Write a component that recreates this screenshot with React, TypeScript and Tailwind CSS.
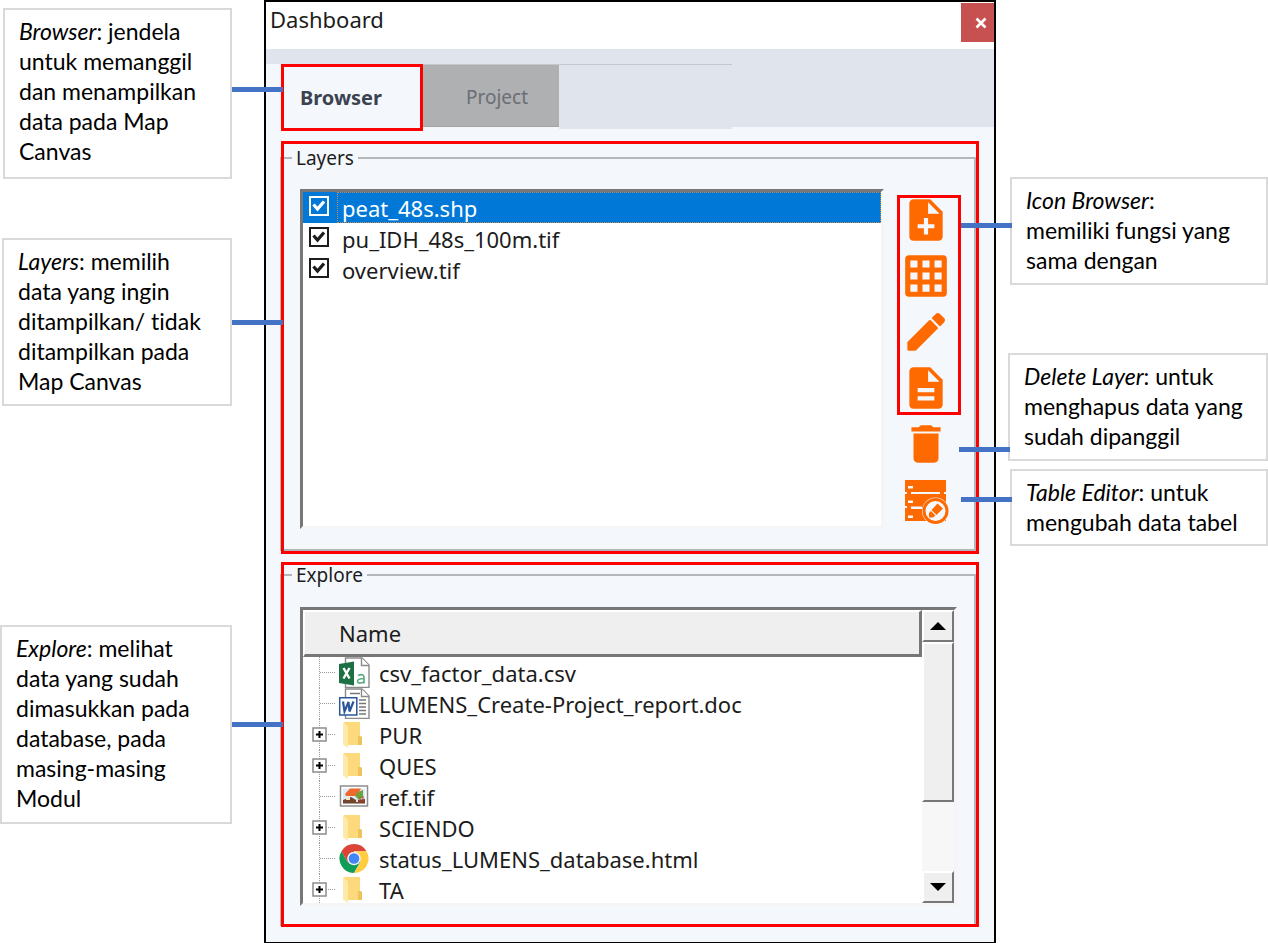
import { useState } from "react";
import type { ReactNode } from "react";
import { MdNoteAdd, MdDescription, MdDelete } from "react-icons/md";

const uiFont = "font-['Noto_Sans','Open_Sans',sans-serif]";

function Connector({ side }: { side: string }) {
  return <span aria-hidden="true" className={"absolute z-20 h-[5px] w-[51px] bg-[#4472c4] " + side} />;
}

function Callout({ className, line, children }: { className: string; line: string; children: ReactNode }) {
  return (
    <aside className={"relative border-2 border-[#d9d9d9] bg-white text-[23px] leading-[30px] text-black font-['Lato',sans-serif] [font-variant-ligatures:none] " + className}>
      <p className="whitespace-nowrap">{children}</p>
      <Connector side={line} />
    </aside>
  );
}

function GridIcon() {
  return (
    <svg viewBox="0 0 24 24" className="size-[50px]">
      <rect x="2" y="2" width="20" height="20" rx="1.800" fill="currentColor" />
      <path
        fill="#f4f8fd"
        d="M4.500 4.500h3.400v3.400h-3.400zM10.300 4.500h3.400v3.400h-3.400zM16.100 4.500h3.400v3.400h-3.400zM4.500 10.300h3.400v3.400h-3.400zM10.300 10.300h3.400v3.400h-3.400zM16.100 10.300h3.400v3.400h-3.400zM4.500 16.100h3.400v3.400h-3.400zM10.300 16.100h3.400v3.400h-3.400zM16.100 16.100h3.400v3.400h-3.400z"
      />
    </svg>
  );
}

function PencilIcon() {
  return (
    <svg viewBox="0 0 24 24" className="size-[50px]" fill="currentColor" stroke="currentColor" strokeWidth="1.1" strokeLinejoin="round">
      <path d="M3.600 17.100V20.400H6.900L17.200 10.100L13.900 6.800Z" />
      <path d="M18.700 8.600L15.400 5.300L17.200 3.600Q17.700 3.200 18.200 3.600L20.400 5.800Q20.800 6.300 20.400 6.800Z" />
    </svg>
  );
}

function TableEditorIcon() {
  return (
    <svg viewBox="0 0 46 46" className="size-[46px]">
      <path fill="#ff6a00" d="M1 1H42V13H40V15H42V27H40V29H42V42H1V29H3V27H1V15H3V13H1Z" />
      <g fill="#f4f8fd">
        <path d="M4 7H9V9.500H4ZM4 21.500H9V24H4ZM4 36.500H9V39H4ZM7 13H36V15H7ZM7 27.500H18V30H7Z" />
        <circle cx="31.500" cy="32" r="13.500" />
      </g>
      <circle cx="31.500" cy="32" r="11.500" fill="none" stroke="#ff6a00" strokeWidth="3" />
      <path fill="#ff6a00" d="M25 38.500V34L27 32L31.500 36.500L29 38.500ZM27.500 31L33.500 24.500L39 29.500L32.500 36Z" />
    </svg>
  );
}

function ExcelIcon() {
  return (
    <svg viewBox="0 0 32 31" className="h-[31px] w-8">
      <path d="M7.500 1H24L31 8V30.500H7.500Z" fill="#fff" stroke="#8b8b8b" strokeWidth="1.400" />
      <path d="M23.500 1V8.500H31" fill="#fff" stroke="#8b8b8b" strokeWidth="1.400" />
      <path d="M1 7L16 4.500V28.500L1 26Z" fill="#1d7044" />
      <path d="M5.500 11L11.500 21.500M11.500 11L5.500 21.500" stroke="#fff" strokeWidth="2.400" />
      <path d="M20 18.500Q26 16 26 20.500V26.500M26 21.500Q19.500 21.500 19.500 24.300Q20 27.500 26 25" fill="none" stroke="#5cab83" strokeWidth="1.700" />
    </svg>
  );
}

function WordIcon() {
  return (
    <svg viewBox="0 0 32 31" className="h-[31px] w-8">
      <path d="M7.500 1H24L31 8V30.500H7.500Z" fill="#fff" stroke="#8b8b8b" strokeWidth="1.400" />
      <path d="M23.500 1V8.500H31" fill="#fff" stroke="#8b8b8b" strokeWidth="1.400" />
      <path d="M12 5.500H22M21 12H28M21 15.500H28M21 19H28M21 22.500H28M21 26H28" stroke="#777" strokeWidth="1.300" />
      <path d="M1.700 9.700H18.800V27H1.700Z" fill="#fff" stroke="#2b579a" strokeWidth="1.500" />
      <path d="M5 13.500L6.500 23.500L10.500 14L11.500 23.500L15.500 13.500" fill="none" stroke="#2b579a" strokeWidth="2.200" />
    </svg>
  );
}

function FolderIcon() {
  return (
    <svg viewBox="0 0 32 31" className="h-[31px] w-8">
      <path d="M6 3H22V17L24 18V26H6Z" fill="#fbd97c" />
      <path d="M22 17H20V26H24V18Z" fill="#edc35b" />
      <path d="M5 3L10 7.500V29L5 25.500Z" fill="#ffe9a8" />
    </svg>
  );
}

function PictureIcon() {
  return (
    <svg viewBox="0 0 32 31" className="h-[31px] w-8">
      <path d="M2.500 5H29.500V25H2.500Z" fill="#fff" stroke="#8d8d8d" strokeWidth="1.500" />
      <path d="M5 7.500H27V22.500H5Z" fill="#dcebf4" />
      <path d="M7 13L12 7.500H23L19 15H8Z" fill="#ee6a2c" />
      <path d="M17 15L20 11L25 9V17L20 18Z" fill="#6ca43b" />
      <path d="M5 19L13 16L18 19L27 18V22.500H5Z" fill="#70452b" />
      <path d="M8 16H12V19H8ZM18 19H20V21H18Z" fill="#f2e5d5" />
      <path d="M22 16V22M25 15V21" stroke="#c63a2b" strokeWidth="1" />
    </svg>
  );
}

function ChromeIcon() {
  return (
    <svg viewBox="0 0 32 31" className="h-[31px] w-8">
      <path d="M16 15.500L3.500 8.300A14.400 14.400 0 0 1 28.500 8.300H16Z" fill="#db4437" />
      <path d="M3.500 8.300A14.400 14.400 0 0 0 16 30L22.300 19L16 15.500L9.800 19.200Z" fill="#0f9d58" />
      <path d="M3.500 8.300L9.800 19.200L16 15.500V8.300Z" fill="#db4437" />
      <path d="M22.300 19L16 30A14.400 14.400 0 0 0 28.500 8.300H16V15.500Z" fill="#ffcd40" />
      <circle cx="16" cy="15.500" r="6.800" fill="#f1f1f1" />
      <circle cx="16" cy="15.500" r="5.300" fill="#4285f4" />
    </svg>
  );
}

const tree: { name: string; icon: () => ReactNode; folder?: boolean }[] = [
  { name: "csv_factor_data.csv", icon: ExcelIcon },
  { name: "LUMENS_Create-Project_report.doc", icon: WordIcon },
  { name: "PUR", icon: FolderIcon, folder: true },
  { name: "QUES", icon: FolderIcon, folder: true },
  { name: "ref.tif", icon: PictureIcon },
  { name: "SCIENDO", icon: FolderIcon, folder: true },
  { name: "status_LUMENS_database.html", icon: ChromeIcon },
  { name: "TA", icon: FolderIcon, folder: true },
];

function Branch({ folder }: { folder?: boolean }) {
  return (
    <svg viewBox="0 0 24 31" className="h-[31px] w-6">
      <path d="M8.500 0V31M9 15.500H24" stroke="#999" strokeDasharray="1 1" />
      {folder && (
        <>
          <path d="M2 9H15V22H2Z" fill="#fff" stroke="#8c8c8c" strokeWidth="1.500" />
          <path d="M5 15.500H12M8.500 12V19" stroke="#000" strokeWidth="2" />
        </>
      )}
    </svg>
  );
}

function Group({ title, className, children }: { title: string; className: string; children: ReactNode }) {
  return (
    <section className={"relative ml-[14px] mr-[15px] pr-[3px] " + className}>
      <fieldset className="min-w-0 border-2 border-[#b4b7ba] pr-[13px] pl-[18px]">
        <legend className="ml-[-8px] h-[26px] px-1 text-[19px] leading-[26px]">{title}</legend>
        {children}
      </fieldset>
      <span aria-hidden="true" className="pointer-events-none absolute inset-y-0 right-0 left-px border-[3px] border-[#ff0000]" />
    </section>
  );
}

const sunken = "border-[3px] border-t-[#777] border-l-[#777] border-r-[#f5f5f5] border-b-[#f5f5f5]";
const raised = "border-t-white border-l-white border-r-[#777] border-b-[#777] bg-[#efefef]";

export default function App() {
  const [layers, setLayers] = useState([
    { name: "peat_48s.shp", on: true },
    { name: "pu_IDH_48s_100m.tif", on: true },
    { name: "overview.tif", on: true },
  ]);
  const toggle = (i: number) => setLayers(layers.map((l, n) => (n === i ? { ...l, on: !l.on } : l)));

  return (
    <div className="flex min-h-screen items-start bg-white">
      <div className="flex w-[264px] shrink-0 flex-col items-end pr-8">
        <Callout className="mt-2 h-[171px] w-[229px] pt-1.5 pl-[14px]" line="top-[77px] left-full ml-0.5">
          <i>Browser</i>: jendela<br />untuk memanggil<br />dan menampilkan<br />data pada Map<br />Canvas
        </Callout>
        <Callout className="mt-[59px] h-[168px] w-[230px] pt-1.5 pl-[14px]" line="top-[80px] left-full ml-0.5">
          <i>Layers</i>: memilih<br />data yang ingin<br />ditampilkan/ tidak<br />ditampilkan pada<br />Map Canvas
        </Callout>
        <Callout className="mt-[219px] h-[199px] w-[232px] pt-1.5 pl-[14px]" line="top-[95px] left-full ml-0.5">
          <i>Explore</i>: melihat<br />data yang sudah<br />dimasukkan pada<br />database, pada<br />masing-masing<br />Modul
        </Callout>
      </div>

      <main className={"min-w-0 flex-1 border-2 border-black bg-[#f4f8fd] pb-[15px] text-[#1c1c1c] " + uiFont}>
        <header className="flex h-[47px] items-start justify-between bg-white pl-1">
          <h1 className="pt-0.5 text-[22px] leading-[30px]">Dashboard</h1>
          <button aria-label="Close" className="mt-px flex h-[39px] w-[33px] items-center justify-center bg-[#c75050] pl-1.5">
            <svg viewBox="0 0 12 12" className="size-3" stroke="#fff" strokeWidth="2.600"><path d="M1.500 1.500L10.500 10.500M10.500 1.500L1.500 10.500" /></svg>
          </button>
        </header>
        <div className="h-[15px] bg-[#e0e4ed]" />
        <nav className="flex items-start pl-[15px]">
          <button className="h-[67px] w-[142px] border-[3px] border-[#ff0000] pr-[22px] text-[20px] font-bold text-[#3c4350]">Browser</button>
          <button className="h-[63px] w-[136px] border-y border-t-[#c4c7cc] border-b-[#a0a2a4] bg-[#aeb0b1] pt-1 pl-3 text-[19px] text-[#6b6e75]">Project</button>
          <div className="h-[65px] w-[173px] border-t border-[#c4c7cc] bg-[#e0e4ed]" />
          <div className="h-[63px] flex-1 bg-[#e0e4ed]" />
        </nav>

        <Group title="Layers" className="mt-[10px] pt-1 pb-[3px]">
          <div className="flex pt-[18px] pb-5">
            <ul className={"h-[340px] min-w-0 flex-1 bg-white " + sunken}>
              {layers.map((l, i) => (
                <li key={l.name}>
                  <label className={"flex h-[31px] items-center pl-1.5 text-[22px] leading-[31px] " + (i === 0 ? "bg-[#0078d7] text-white" : "")}>
                    <span className="relative mb-1 size-5 shrink-0">
                      <input type="checkbox" checked={l.on} onChange={() => toggle(i)} className="block size-5 appearance-none border-2 border-current" />
                      {l.on && (
                        <svg viewBox="0 0 20 20" className="pointer-events-none absolute inset-0" fill="none" stroke="currentColor" strokeWidth="3.200">
                          <path d="M4.500 8.500L8.500 13L15 5.500" />
                        </svg>
                      )}
                    </span>
                    <span className={"ml-2 flex h-full flex-1 items-center border border-dotted pt-0.5 pl-1 " + (i === 0 ? "border-[#c98a50]" : "border-transparent")}>{l.name}</span>
                  </label>
                </li>
              ))}
            </ul>
            <div className="ml-[13px] flex flex-col items-center text-[#ff6a00]">
              <div className="mt-1.5 flex h-[220px] w-16 flex-col items-center gap-1.5 border-[3px] border-[#ff0000] pr-1.5">
                <button aria-label="Add layer" className="mt-[-3px]"><MdNoteAdd className="size-[50px]" /></button>
                <button aria-label="Grid"><GridIcon /></button>
                <button aria-label="Edit layer"><PencilIcon /></button>
                <button aria-label="Attributes"><MdDescription className="size-[50px]" /></button>
              </div>
              <button aria-label="Delete layer" className="mt-1 pr-1.5"><MdDelete className="size-[50px]" /></button>
              <button aria-label="Table editor" className="mt-2.5 pr-1"><TableEditorIcon /></button>
            </div>
          </div>
        </Group>

        <Group title="Explore" className="mt-2 pb-px">
          <div className="pt-[19px] pb-[18px] pr-1">
            <div className={"flex h-[299px] bg-white " + sunken}>
              <div className="min-w-0 flex-1 overflow-hidden">
                <div className={"h-[47px] border-t-2 border-r-[3px] border-b-[3px] border-l-2 pt-1 pl-[34px] text-[22px] leading-[34px] " + raised}>Name</div>
                <ul>
                  {tree.map(({ name, icon: Icon, folder }) => (
                    <li key={name} className="flex h-[31px] items-center pl-2 text-[22px] leading-6">
                      <Branch folder={folder} />
                      <span className="ml-[3px] shrink-0"><Icon /></span>
                      <span className="pl-[9px]">{name}</span>
                    </li>
                  ))}
                </ul>
              </div>
              <div className="flex w-8 flex-col bg-[#f7f7f7]">
                <button aria-label="Scroll up" className={"flex h-8 items-center justify-center border-2 " + raised}>
                  <svg viewBox="0 0 16 8" className="h-2 w-4"><path d="M0 8L8 0L16 8Z" /></svg>
                </button>
                <div className={"h-40 border-2 " + raised} />
                <button aria-label="Scroll down" className={"mt-auto flex h-8 items-center justify-center border-2 " + raised}>
                  <svg viewBox="0 0 16 8" className="h-2 w-4"><path d="M0 0L8 8L16 0Z" /></svg>
                </button>
              </div>
            </div>
          </div>
        </Group>
      </main>

      <div className="flex w-[272px] shrink-0 flex-col items-end">
        <Callout className="mt-[177px] h-[108px] w-[258px] pt-1.5 pl-[14px]" line="top-[44px] right-full">
          <i>Icon Browser</i>:<br />memiliki fungsi yang<br />sama dengan
        </Callout>
        <Callout className="mt-[68px] h-[108px] w-[260px] pt-1.5 pl-[14px]" line="top-[92px] right-full">
          <i>Delete Layer</i>: untuk<br />menghapus data yang<br />sudah dipanggil
        </Callout>
        <Callout className="mt-2 h-[77px] w-[258px] pt-1.5 pl-[14px]" line="top-[26px] right-full">
          <i>Table Editor</i>: untuk<br />mengubah data tabel
        </Callout>
      </div>
    </div>
  );
}
